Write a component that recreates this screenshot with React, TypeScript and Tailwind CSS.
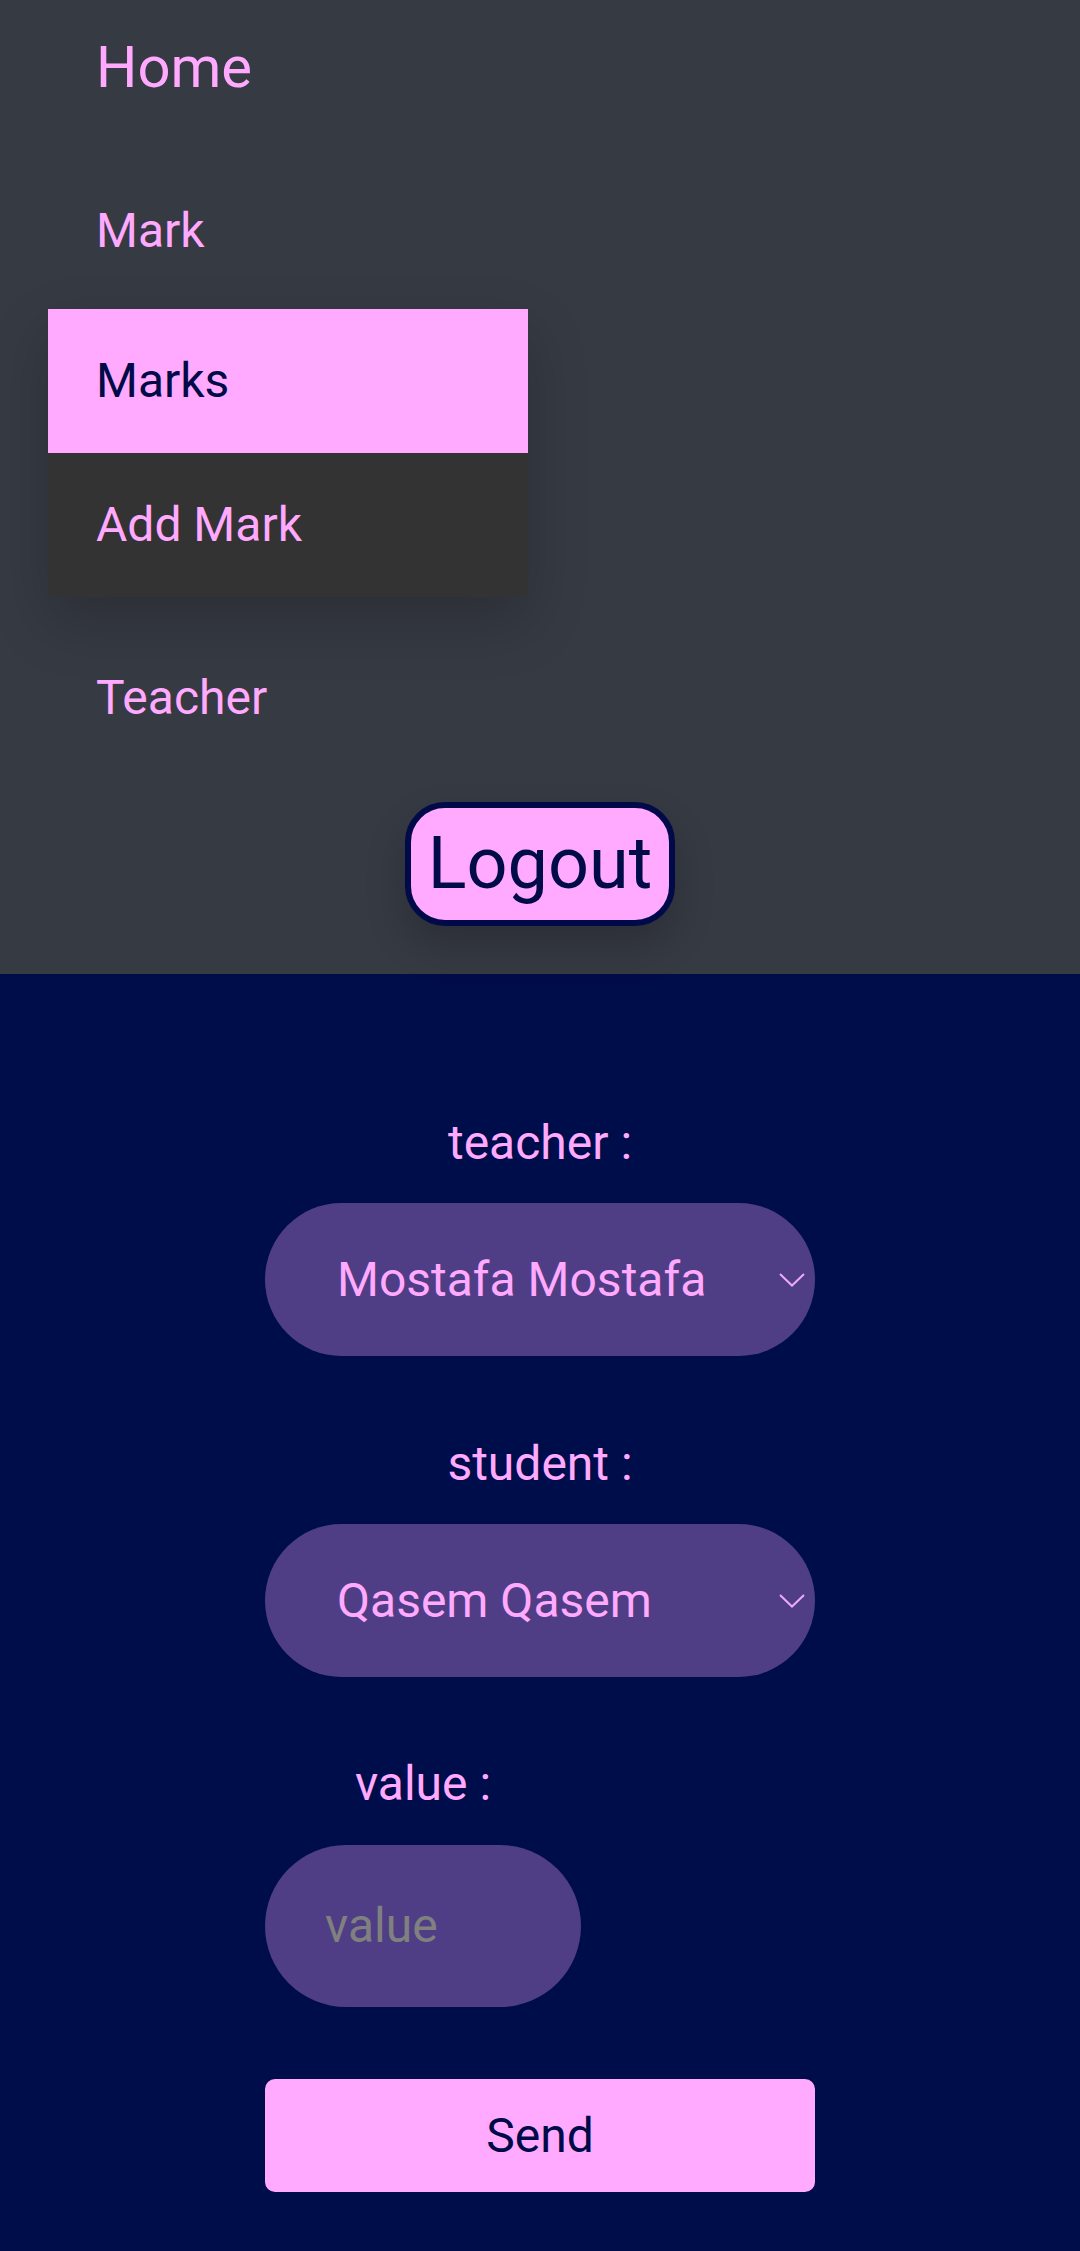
const pink = 'text-[#ffaaff]';

function Chevron() {
  return (
    <svg width="26" height="14" viewBox="0 0 26 14" fill="none" className="shrink-0">
      <polyline points="1,1 13,12.5 25,1" stroke="#eeaaf8" strokeWidth="2" />
    </svg>
  );
}

function SelectBox({ value }: { value: string }) {
  return (
    <div className="w-[550px] h-[153px] rounded-full bg-[#4f3e85] flex items-center justify-between pl-[72px] pr-[10px]">
      <span className={`text-[48px] leading-[56px] ${pink}`}>{value}</span>
      <Chevron />
    </div>
  );
}

export default function App() {
  return (
    <div className="min-h-[2251px] bg-[#000d4b] font-['Roboto','Liberation_Sans',sans-serif]">
      <header className="bg-[#363a43] px-[48px] pt-[38px] pb-[48px]">
        <div className={`pl-[48px] text-[58px] leading-[58px] ${pink}`}>Home</div>
        <div className={`mt-[63px] pl-[48px] text-[48px] leading-[144px] ${pink}`}>Mark</div>
        <div className="mt-[6px] w-[480px] bg-[#333333] shadow-[0_24px_56px_rgba(0,0,0,0.2)]">
          <div className="px-[48px] text-[48px] leading-[144px] bg-[#ffaaff] text-[#000b48]">Marks</div>
          <div className={`px-[48px] text-[48px] leading-[144px] ${pink}`}>Add Mark</div>
        </div>
        <div className={`mt-[29px] pl-[48px] text-[48px] leading-[144px] ${pink}`}>Teacher</div>
        <div className="mt-[32px] flex justify-center">
          <button className="w-[270px] h-[124px] rounded-[40px] border-[6px] border-[#010a48] bg-[#ffaaff] text-[#000b48] text-[72px] leading-[112px] shadow-[0_20px_40px_rgba(0,0,0,0.2)]">
            Logout
          </button>
        </div>
      </header>

      <main className="pt-[145px] pb-[59px]">
        <form className="w-[550px] mx-auto flex flex-col items-start">
          <div className="flex flex-col items-center">
            <label className={`text-[48px] leading-[48px] ${pink}`}>teacher :</label>
            <div className="mt-[36px]">
              <SelectBox value="Mostafa Mostafa" />
            </div>
          </div>

          <div className="mt-[84px] flex flex-col items-center">
            <label className={`text-[48px] leading-[48px] ${pink}`}>student :</label>
            <div className="mt-[36px]">
              <SelectBox value="Qasem Qasem" />
            </div>
          </div>

          <div className="mt-[83px] flex flex-col items-center">
            <label className={`text-[48px] leading-[48px] ${pink}`}>value :</label>
            <div className="mt-[37px] w-[316px] h-[162px] rounded-full bg-[#4f3e85] flex items-center pl-[60px]">
              <span className="text-[48px] leading-[56px] text-[#808080]">value</span>
            </div>
          </div>

          <button
            type="button"
            className="mt-[72px] w-[550px] h-[113px] rounded-[10px] bg-[#ffaaff] text-[#000b48] text-[48px] leading-[113px] text-center"
          >
            Send
          </button>
        </form>
      </main>
    </div>
  );
}
